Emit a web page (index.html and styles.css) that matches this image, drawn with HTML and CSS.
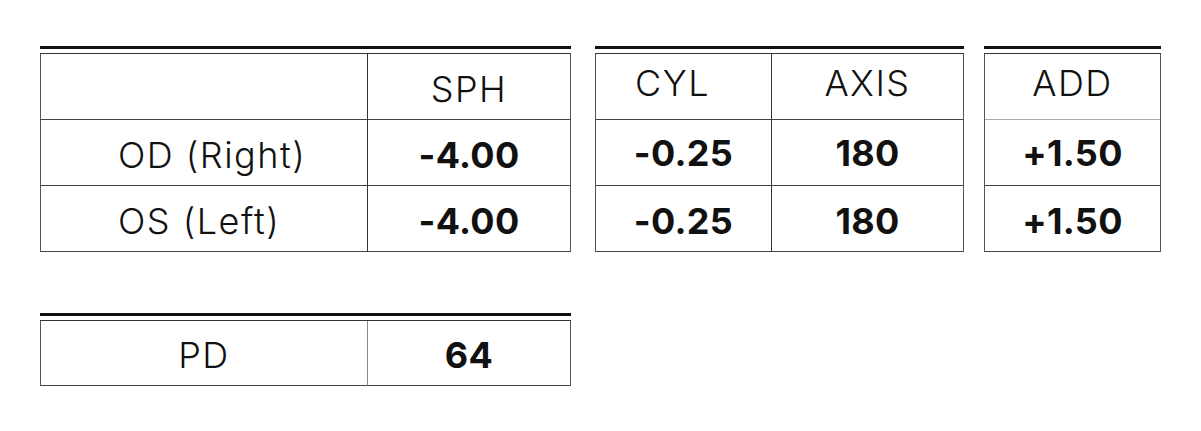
FILE: index.html
```html
<!DOCTYPE html>
<html lang="en">
<head>
<meta charset="utf-8">
<title>Prescription</title>
<link rel="stylesheet" href="styles.css">
</head>
<body>
<main class="page">
  <section class="row-top">
    <div class="rx rx-sph">
      <div class="grid">
        <div class="cell label"></div>
        <div class="cell label">SPH</div>
        <div class="cell label eye">OD (Right)</div>
        <div class="cell value">-4.00</div>
        <div class="cell label eye">OS (Left)</div>
        <div class="cell value">-4.00</div>
      </div>
    </div>
    <div class="rx rx-cyl">
      <div class="grid">
        <div class="cell label head shift-left">CYL</div>
        <div class="cell label head">AXIS</div>
        <div class="cell value first">-0.25</div>
        <div class="cell value first">180</div>
        <div class="cell value">-0.25</div>
        <div class="cell value">180</div>
      </div>
    </div>
    <div class="rx rx-add">
      <div class="grid">
        <div class="cell label head light-line">ADD</div>
        <div class="cell value first">+1.50</div>
        <div class="cell value">+1.50</div>
      </div>
    </div>
  </section>
  <section class="row-bottom">
    <div class="rx rx-pd">
      <div class="grid">
        <div class="cell label">PD</div>
        <div class="cell value">64</div>
      </div>
    </div>
  </section>
</main>
</body>
</html>
```

FILE: styles.css
```css
* { box-sizing: border-box; }
html, body { margin: 0; padding: 0; background: #fff; }
body {
  font-family: Inter, "Noto Sans", "Liberation Sans", sans-serif;
  color: #111;
}
.page {
  padding: 46px 0 0 40px;
}
.row-top {
  display: flex;
  align-items: flex-start;
}
.rx-sph { margin-right: 24px; }
.rx-cyl { margin-right: 20px; }
.row-bottom {
  display: flex;
  margin-top: 61px;
}
.rx {
  border-top: 3px solid #111;
  padding-top: 4px;
}
.grid {
  display: grid;
  border-top: 1px solid #333;
  border-left: 1px solid #555;
  border-right: 1px solid #555;
}
.rx-sph .grid { grid-template-columns: 327px 202px; }
.rx-cyl .grid { grid-template-columns: 176px 191px; }
.rx-add .grid { grid-template-columns: 175px; }
.rx-pd .grid { grid-template-columns: 327px 202px; }
.cell {
  height: 66px;
  border-bottom: 1px solid #444;
  display: flex;
  align-items: center;
  justify-content: center;
  padding-top: 4px;
  font-size: 36px;
  line-height: 1;
}
.rx-pd .cell { height: 65px; }
.rx-sph .cell:nth-child(odd),
.rx-cyl .cell:nth-child(odd),
.rx-pd .cell:nth-child(odd) {
  border-right: 1px solid #333;
}
.label {
  font-weight: 300;
  letter-spacing: 1.5px;
}
.value {
  font-weight: 700;
  letter-spacing: 0.3px;
}
.eye {
  justify-content: flex-start;
  padding-left: 77px;
}
.head {
  padding-top: 0;
  padding-bottom: 8px;
}
.first { padding-top: 0; }
.shift-left { padding-right: 22px; }
.light-line { border-bottom-color: #aaa; }
.rx-pd .cell:first-child { border-right-color: #888; }
```
